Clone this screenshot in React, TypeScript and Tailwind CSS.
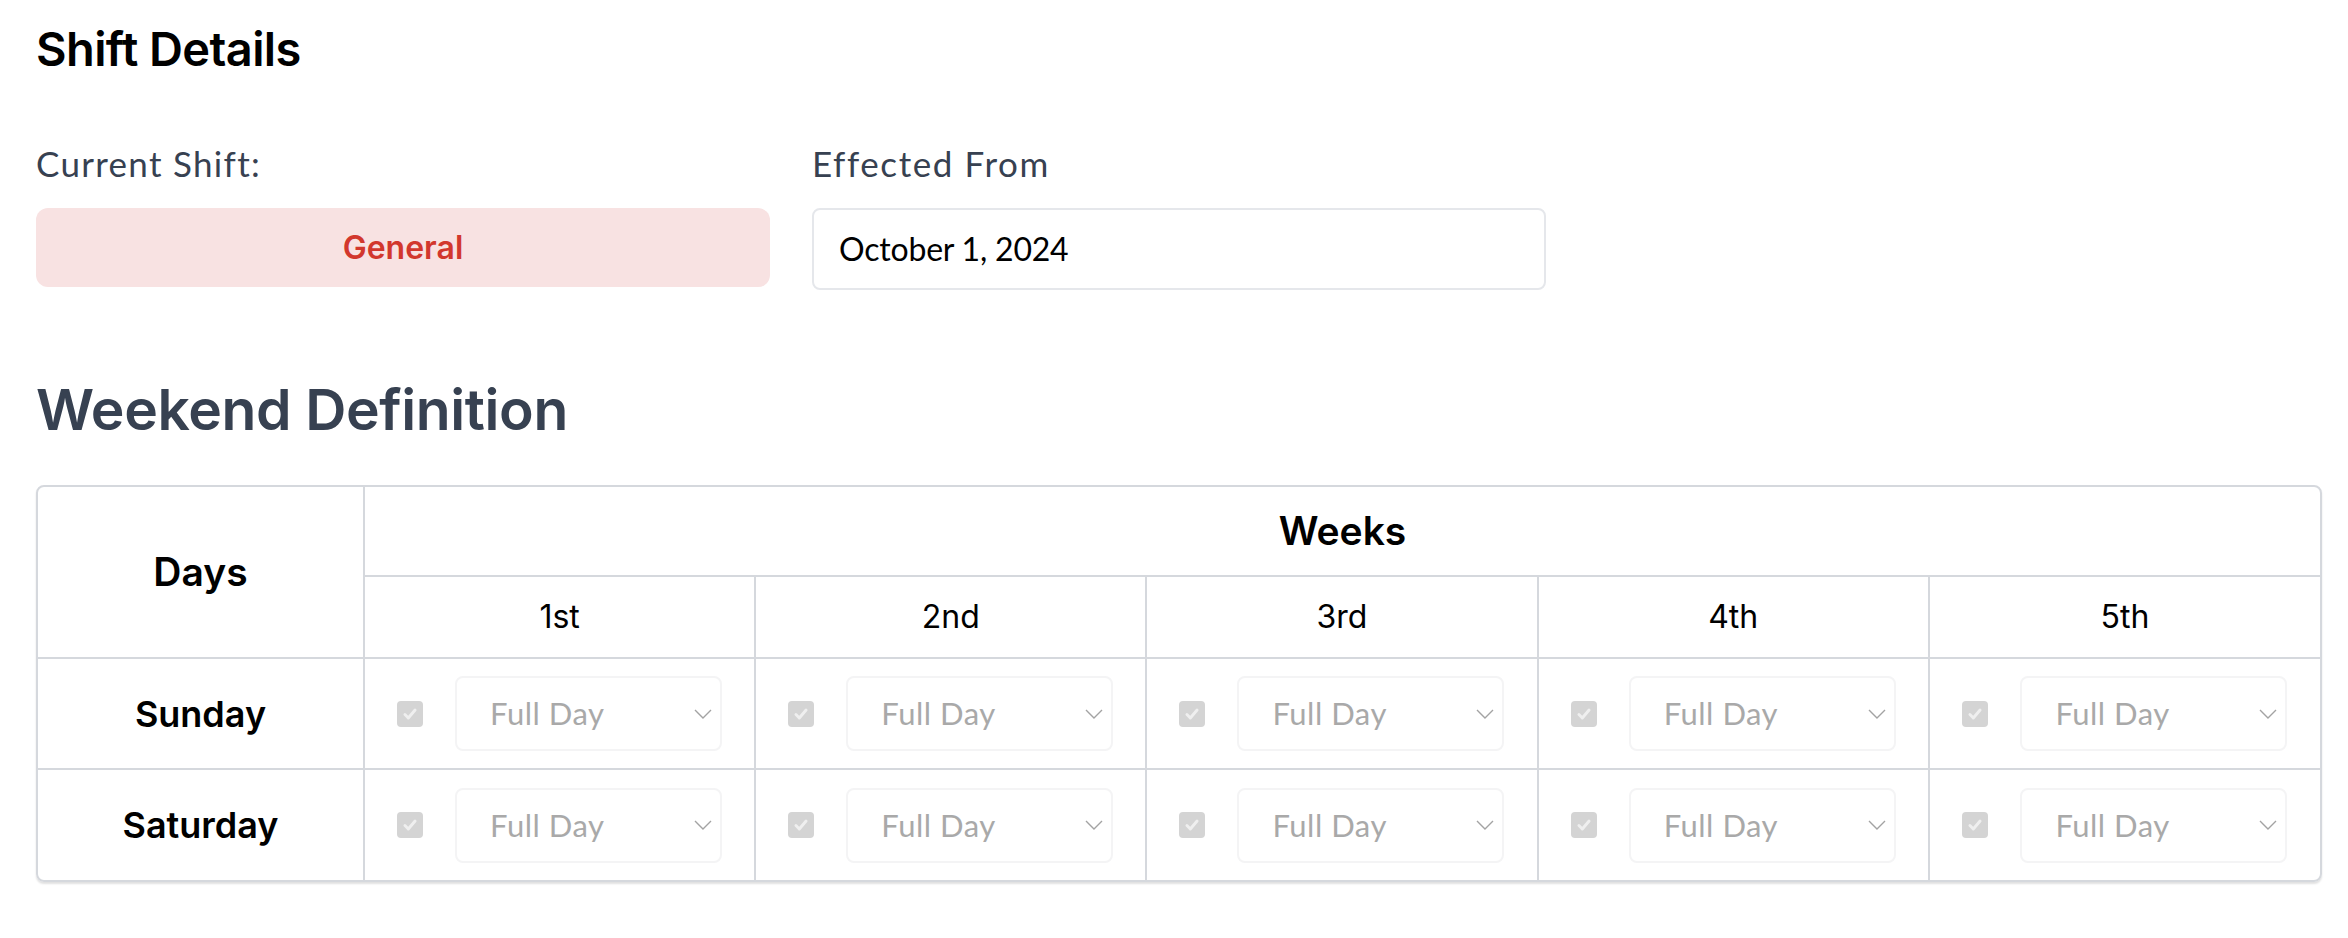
import React from 'react';

const weeks = ['1st', '2nd', '3rd', '4th', '5th'];
const days = ['Sunday', 'Saturday'];

const WeekCell: React.FC = () => (
  <td className="border-l-2 border-t-2 border-[#d5d8dd] p-0">
    <div className="flex items-center justify-center gap-[32px]">
      <span className="flex h-[26px] w-[26px] shrink-0 items-center justify-center rounded-[4px] bg-[#d4d4d4]">
        <svg viewBox="0 0 16 16" className="h-[18px] w-[18px]" fill="none">
          <path d="M3.5 8.5l3 3 6-7" stroke="#efefef" strokeWidth="2.6" strokeLinecap="round" strokeLinejoin="round" />
        </svg>
      </span>
      <div className="flex h-[75px] w-[267px] items-center justify-between rounded-[8px] border-2 border-[#f4f4f5] pl-[33px] pr-[8px]">
        <span className="font-['Lato',sans-serif] text-[31px] tracking-[0.5px] text-[#a9a9a9]">Full Day</span>
        <svg viewBox="0 0 18 10" className="h-[10px] w-[18px]" fill="none">
          <path d="M1 1l8 8 8-8" stroke="#a3a3a3" strokeWidth="1.4" />
        </svg>
      </div>
    </div>
  </td>
);

export default function App() {
  return (
    <div className="min-h-screen bg-white pl-[36px] pr-[26px] pt-[25px] font-['Inter',sans-serif]">
      <h1 className="text-[47px] font-semibold leading-[47px] tracking-[-0.6px] text-black">Shift Details</h1>

      <div className="mt-[74px] grid grid-cols-3 gap-x-[42px]">
        <div>
          <label className="block font-['Lato',sans-serif] text-[35px] leading-[35px] tracking-[1.3px] text-[#374151]">Current Shift:</label>
          <div className="mt-[27px] flex h-[79px] items-center justify-center rounded-[12px] bg-[#f8e2e2]">
            <span className="text-[32px] font-semibold text-[#d2372d]">General</span>
          </div>
        </div>
        <div>
          <label className="block font-['Lato',sans-serif] text-[35px] leading-[35px] tracking-[1.6px] text-[#374151]">Effected From</label>
          <div className="mt-[27px] flex h-[82px] items-center rounded-[8px] border-2 border-[#e5e7eb] pl-[25px]">
            <span className="font-['Lato',sans-serif] text-[32px] tracking-[-0.2px] text-black">October 1, 2024</span>
          </div>
        </div>
      </div>

      <h2 className="mt-[91px] text-[57px] font-semibold leading-[57px] tracking-[-0.4px] text-[#374151]">Weekend Definition</h2>

      <div className="mt-[47px] overflow-hidden rounded-[8px] border-2 border-[#d5d8dd] shadow-[0_2px_2px_rgba(0,0,0,0.12)]">
        <table className="w-full table-fixed border-collapse text-black">
          <colgroup>
            <col className="w-[326px]" />
            {weeks.map((w) => (
              <col key={w} />
            ))}
          </colgroup>
          <thead>
            <tr className="h-[89px]">
              <th rowSpan={2} className="text-[39px] font-semibold">Days</th>
              <th colSpan={5} className="border-l-2 border-[#d5d8dd] text-[39px] font-semibold">Weeks</th>
            </tr>
            <tr className="h-[82px]">
              {weeks.map((w) => (
                <th key={w} className="border-l-2 border-t-2 border-[#d5d8dd] text-[32px] font-normal">
                  {w}
                </th>
              ))}
            </tr>
          </thead>
          <tbody>
            {days.map((d) => (
              <tr key={d} className="h-[111px]">
                <td className="border-t-2 border-[#d5d8dd] text-center text-[36px] font-semibold">{d}</td>
                {weeks.map((w) => (
                  <WeekCell key={w} />
                ))}
              </tr>
            ))}
          </tbody>
        </table>
      </div>
    </div>
  );
}
